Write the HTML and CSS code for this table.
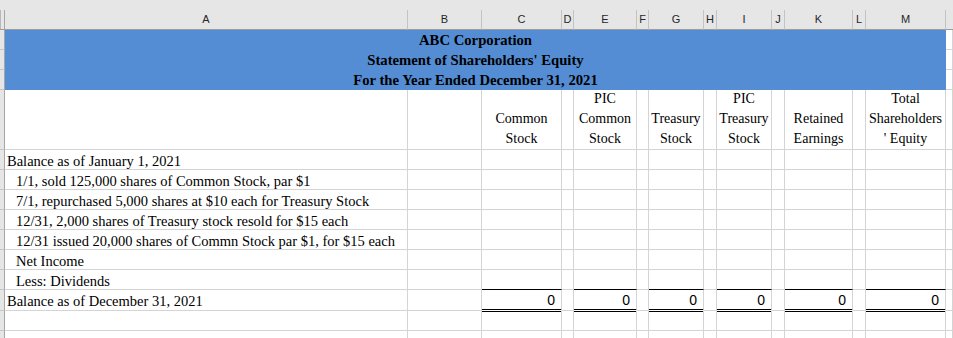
FILE: index.html
```html
<!DOCTYPE html>
<html lang="en">
<head>
<meta charset="utf-8">
<title>Statement of Shareholders' Equity</title>
<link rel="stylesheet" href="styles.css">
</head>
<body>
<div class="sheet">
  <div class="topbar"></div>

  <!-- column letters -->
  <div class="corner"></div>
  <div class="ch">A</div><div class="ch">B</div><div class="ch">C</div><div class="ch">D</div>
  <div class="ch">E</div><div class="ch">F</div><div class="ch">G</div><div class="ch">H</div>
  <div class="ch">I</div><div class="ch">J</div><div class="ch">K</div><div class="ch">L</div>
  <div class="ch">M</div><div class="ch end"></div>

  <!-- rows 1-3: merged title block -->
  <div class="rh"></div>
  <div class="banner">
    <p>ABC Corporation</p>
    <p>Statement of Shareholders' Equity</p>
    <p>For the Year Ended December 31, 2021</p>
  </div>
  <div></div>
  <div class="rh"></div><div></div>
  <div class="rh"></div><div></div>

  <!-- row 4: column captions -->
  <div class="rh"></div>
  <div></div><div></div>
  <div class="cap">Common<br>Stock</div><div></div>
  <div class="cap">PIC<br>Common<br>Stock</div><div></div>
  <div class="cap">Treasury<br>Stock</div><div></div>
  <div class="cap">PIC<br>Treasury<br>Stock</div><div></div>
  <div class="cap">Retained<br>Earnings</div><div></div>
  <div class="cap">Total<br>Shareholders<br>' Equity</div><div></div>

  <!-- row 5 -->
  <div class="rh"></div>
  <div class="lbl">Balance as of January 1, 2021</div>
  <div></div><div></div><div></div><div></div><div></div><div></div><div></div><div></div><div></div><div></div><div></div><div></div><div></div>

  <!-- row 6 -->
  <div class="rh"></div>
  <div class="lbl ind">1/1, sold 125,000 shares of Common Stock, par $1</div>
  <div></div><div></div><div></div><div></div><div></div><div></div><div></div><div></div><div></div><div></div><div></div><div></div><div></div>

  <!-- row 7 -->
  <div class="rh"></div>
  <div class="lbl ind">7/1, repurchased 5,000 shares at $10 each for Treasury Stock</div>
  <div></div><div></div><div></div><div></div><div></div><div></div><div></div><div></div><div></div><div></div><div></div><div></div><div></div>

  <!-- row 8 -->
  <div class="rh"></div>
  <div class="lbl ind">12/31, 2,000 shares of Treasury stock resold for $15 each</div>
  <div></div><div></div><div></div><div></div><div></div><div></div><div></div><div></div><div></div><div></div><div></div><div></div><div></div>

  <!-- row 9 -->
  <div class="rh"></div>
  <div class="lbl ind">12/31 issued 20,000 shares of Commn Stock par $1, for $15 each</div>
  <div></div><div></div><div></div><div></div><div></div><div></div><div></div><div></div><div></div><div></div><div></div><div></div><div></div>

  <!-- row 10 -->
  <div class="rh"></div>
  <div class="lbl ind">Net Income</div>
  <div></div><div></div><div></div><div></div><div></div><div></div><div></div><div></div><div></div><div></div><div></div><div></div><div></div>

  <!-- row 11: single rule above the totals -->
  <div class="rh"></div>
  <div class="lbl ind">Less: Dividends</div>
  <div></div>
  <div class="rule"></div><div></div>
  <div class="rule"></div><div></div>
  <div class="rule"></div><div></div>
  <div class="rule"></div><div></div>
  <div class="rule"></div><div></div>
  <div class="rule"></div><div></div>

  <!-- row 12: closing balances -->
  <div class="rh"></div>
  <div class="lbl">Balance as of December 31, 2021</div>
  <div></div>
  <div class="num total">0</div><div></div>
  <div class="num total">0</div><div></div>
  <div class="num total">0</div><div></div>
  <div class="num total">0</div><div></div>
  <div class="num total">0</div><div></div>
  <div class="num total">0</div><div></div>

  <!-- rows 13-14: empty -->
  <div class="rh"></div>
  <div></div><div></div><div></div><div></div><div></div><div></div><div></div><div></div><div></div><div></div><div></div><div></div><div></div><div></div>
  <div class="rh"></div>
  <div></div><div></div><div></div><div></div><div></div><div></div><div></div><div></div><div></div><div></div><div></div><div></div><div></div><div></div>
</div>
</body>
</html>
```

FILE: styles.css
```css
* {
  box-sizing: border-box;
  margin: 0;
  padding: 0;
}

html,
body {
  width: 953px;
  height: 338px;
  overflow: hidden;
  background: #fff;
}

body {
  font-family: "Liberation Serif", "Times New Roman", serif;
  font-size: 14px;
  color: #000;
}

/* worksheet grid: row header, columns A-M, then the edge of column N */
.sheet {
  display: grid;
  grid-template-columns: 5px 403px 74px 80px 12px 63px 12px 55px 13px 55px 13px 68px 13px 80px 1fr;
  grid-template-rows: 10px 20px 20px 20px 20px 60px repeat(7, 20px) 21px 20px 20px;
}

.sheet > div {
  min-width: 0;
  white-space: nowrap;
  border-right: 1px solid #d4d4d4;
  border-bottom: 1px solid #d4d4d4;
}

.sheet > .topbar {
  grid-column: 1 / -1;
  background: #e6e6e6;
  border: none;
}

/* headers */
.sheet > .corner {
  background: #e6e6e6;
  border-right: 1px solid #a6a6a6;
  border-bottom: 1px solid #9c9c9c;
  box-shadow: inset 2px 0 0 -1px #b8b8b8;
}

.sheet > .ch {
  background: #e6e6e6;
  border-right: 1px solid #c3c3c3;
  border-bottom: 1px solid #9c9c9c;
  font-family: "Liberation Sans", Arial, sans-serif;
  font-size: 11px;
  line-height: 19px;
  text-align: center;
  color: #262626;
}

.sheet > .ch.end {
  border-right: none;
}

.sheet > .rh {
  background: #e6e6e6;
  border-right: 1px solid #a6a6a6;
  border-bottom: 1px solid #c6c6c6;
}

/* merged title block */
.sheet > .banner {
  grid-column: 2 / 15;
  grid-row: span 3;
  background: #548dd4;
  border: none;
  font-size: 14.7px;
  font-weight: bold;
  line-height: 20px;
  text-align: center;
}

/* column captions, wrapped and bottom aligned */
.cap {
  display: flex;
  flex-direction: column;
  justify-content: flex-end;
  line-height: 20px;
  text-align: center;
}

/* row labels */
.lbl {
  padding: 3px 0 0 2px;
  font-size: 14.5px;
  line-height: 16px;
}

.lbl.ind {
  padding-left: 11px;
}

/* totals */
.sheet > .rule {
  border-bottom-color: #000;
}

.num {
  padding: 2px 6px 0 0;
  font-family: "Liberation Sans", Arial, sans-serif;
  font-size: 14px;
  line-height: 16px;
  text-align: right;
}

.sheet > .total {
  margin-bottom: -1px;
  border-bottom: 3px double #000;
}
```
